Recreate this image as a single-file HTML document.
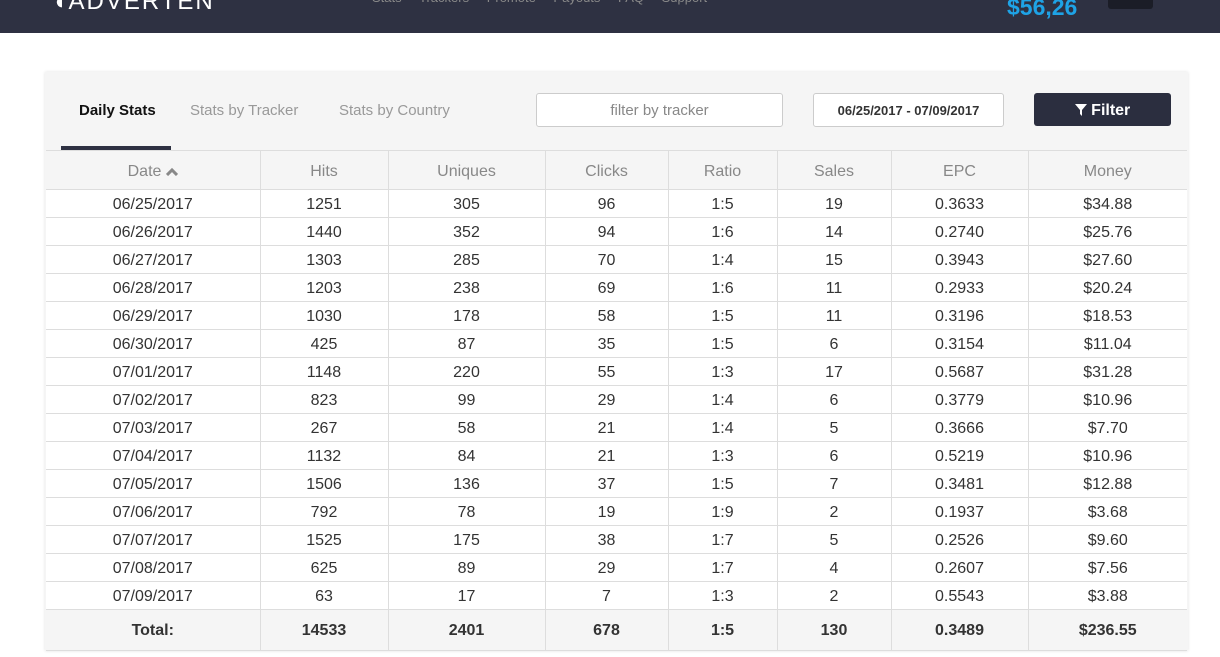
<!DOCTYPE html>
<html><head><meta charset="utf-8"><style>
*{margin:0;padding:0;box-sizing:border-box}
body{width:1220px;height:657px;background:#fff;font-family:"Liberation Sans",sans-serif;position:relative;overflow:hidden}
.hdr{position:absolute;left:0;top:0;width:1220px;height:33px;background:#2e3142}
.logo{position:absolute;left:52px;top:-12px;color:#fff;font-size:24px;letter-spacing:2px}
.nav{position:absolute;left:372px;top:-10px;color:#888;font-size:13px;word-spacing:14px}
.bal{position:absolute;left:1007px;top:-6px;color:#1ea3e6;font-size:23px;font-weight:bold}
.lang{position:absolute;left:1108px;top:0;width:45px;height:9px;background:#1b1d27;border-radius:0 0 3px 3px}
.card{position:absolute;left:45px;top:72px;width:1143px;height:579px;background:#f5f5f5;box-shadow:0 0 3px rgba(0,0,0,.12)}
.tab{position:absolute;top:102px;font-size:15px;color:#999}
.tab.a{color:#111;font-weight:bold}
.ul{position:absolute;left:61px;top:146px;width:110px;height:4px;background:#2e3142}
.inp{position:absolute;top:93px;height:34px;background:#fff;border:1px solid #ccc;border-radius:3px;text-align:center;line-height:34px}
.btn{position:absolute;left:1034px;top:93px;width:137px;height:33px;background:#2b2e3f;border-radius:3px;color:#fff;font-weight:bold;font-size:16px;text-align:center;line-height:35px}
table{position:absolute;left:46px;top:150px;border-collapse:collapse;font-size:16px;color:#333}
td,th{border:1px solid #ddd;text-align:center;padding:0}
th{height:39px;color:#888;font-weight:normal;font-size:16px;background:#f5f5f5;border-top:1px solid #ddd;padding-top:3px}
td{height:28px;background:#fff;padding-top:2px}
tr.t td{height:41px;background:#f5f5f5;font-weight:bold;font-size:16px}
tr :first-child{border-left:none}tr :last-child{border-right:none}
</style></head><body>
<div class="hdr"><div class="logo">◖ADVERTEN</div><div class="nav">Stats Trackers Promote Payouts FAQ Support</div><div class="bal">$56,26</div><div class="lang"></div></div>
<div class="card"></div>
<div class="tab a" style="left:79px">Daily Stats</div>
<div class="tab" style="left:190px">Stats by Tracker</div>
<div class="tab" style="left:339px">Stats by Country</div>
<div class="ul"></div>
<div class="inp" style="left:536px;width:247px;color:#888;font-size:15px">filter by tracker</div>
<div class="inp" style="left:813px;width:191px;color:#333;font-size:13px;font-weight:bold">06/25/2017 - 07/09/2017</div>
<div class="btn"><svg width="12" height="12" viewBox="0 0 12 12" style="vertical-align:-1px"><path d="M0 0H12L7 6V12L5 10V6Z" fill="#fff"/></svg> Filter</div>
<table>
<colgroup><col style="width:214px"><col style="width:128px"><col style="width:157px"><col style="width:123px"><col style="width:109px"><col style="width:114px"><col style="width:137px"><col style="width:159px"></colgroup>
<tr><th>Date <svg width="12" height="9" viewBox="0 0 12 9"><path d="M1 8L6 3L11 8" stroke="#888" stroke-width="3" fill="none"/></svg></th><th>Hits</th><th>Uniques</th><th>Clicks</th><th>Ratio</th><th>Sales</th><th>EPC</th><th>Money</th></tr>
<tr><td>06/25/2017</td><td>1251</td><td>305</td><td>96</td><td>1:5</td><td>19</td><td>0.3633</td><td>$34.88</td></tr>
<tr><td>06/26/2017</td><td>1440</td><td>352</td><td>94</td><td>1:6</td><td>14</td><td>0.2740</td><td>$25.76</td></tr>
<tr><td>06/27/2017</td><td>1303</td><td>285</td><td>70</td><td>1:4</td><td>15</td><td>0.3943</td><td>$27.60</td></tr>
<tr><td>06/28/2017</td><td>1203</td><td>238</td><td>69</td><td>1:6</td><td>11</td><td>0.2933</td><td>$20.24</td></tr>
<tr><td>06/29/2017</td><td>1030</td><td>178</td><td>58</td><td>1:5</td><td>11</td><td>0.3196</td><td>$18.53</td></tr>
<tr><td>06/30/2017</td><td>425</td><td>87</td><td>35</td><td>1:5</td><td>6</td><td>0.3154</td><td>$11.04</td></tr>
<tr><td>07/01/2017</td><td>1148</td><td>220</td><td>55</td><td>1:3</td><td>17</td><td>0.5687</td><td>$31.28</td></tr>
<tr><td>07/02/2017</td><td>823</td><td>99</td><td>29</td><td>1:4</td><td>6</td><td>0.3779</td><td>$10.96</td></tr>
<tr><td>07/03/2017</td><td>267</td><td>58</td><td>21</td><td>1:4</td><td>5</td><td>0.3666</td><td>$7.70</td></tr>
<tr><td>07/04/2017</td><td>1132</td><td>84</td><td>21</td><td>1:3</td><td>6</td><td>0.5219</td><td>$10.96</td></tr>
<tr><td>07/05/2017</td><td>1506</td><td>136</td><td>37</td><td>1:5</td><td>7</td><td>0.3481</td><td>$12.88</td></tr>
<tr><td>07/06/2017</td><td>792</td><td>78</td><td>19</td><td>1:9</td><td>2</td><td>0.1937</td><td>$3.68</td></tr>
<tr><td>07/07/2017</td><td>1525</td><td>175</td><td>38</td><td>1:7</td><td>5</td><td>0.2526</td><td>$9.60</td></tr>
<tr><td>07/08/2017</td><td>625</td><td>89</td><td>29</td><td>1:7</td><td>4</td><td>0.2607</td><td>$7.56</td></tr>
<tr><td>07/09/2017</td><td>63</td><td>17</td><td>7</td><td>1:3</td><td>2</td><td>0.5543</td><td>$3.88</td></tr>
<tr class="t"><td>Total:</td><td>14533</td><td>2401</td><td>678</td><td>1:5</td><td>130</td><td>0.3489</td><td>$236.55</td></tr>
</table>
</body></html>
